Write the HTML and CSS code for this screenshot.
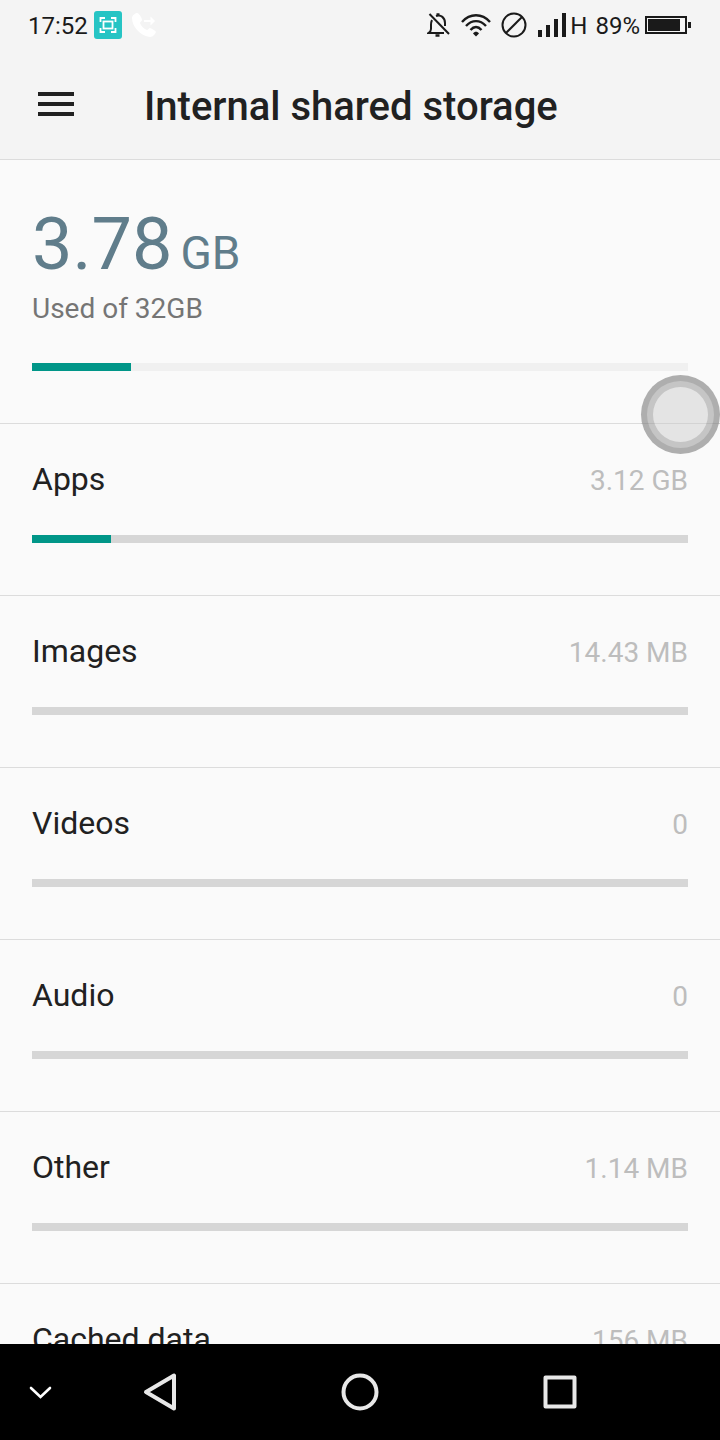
FILE: index.html
```html
<!DOCTYPE html>
<html lang="en">
<head>
<meta charset="utf-8">
<meta name="viewport" content="width=device-width, initial-scale=1">
<title>Internal shared storage</title>
<link rel="stylesheet" href="styles.css">
</head>
<body>
<div class="screen">
  <div class="status">
    <div class="status-group status-left">
      <span class="clock">17:52</span>
      <svg class="capture" width="28" height="28" viewBox="0 0 28 28" aria-hidden="true">
        <rect width="28" height="28" rx="3" fill="#26c4c4"/>
        <g fill="none" stroke="#fff" stroke-width="1.8">
          <path d="M6.500 11V7H11M17 7h4.500v4M21.500 17v4H17M11 21H6.500v-4"/>
          <rect x="9.500" y="10.500" width="9" height="7"/>
        </g>
      </svg>
      <svg class="call" width="28" height="28" viewBox="0 0 28 28" aria-hidden="true">
        <path d="M7 2c-1 0-5 2-5 5 0 9 9 18 18 19 3 0 5-3 6-5 0-1-5-4-6-4-1 0-2 2-3 2-3-1-6-4-7-7 0-1 2-2 2-3 0-2-3-7-5-7z" fill="#fff"/>
        <path d="M14 10h8" stroke="#fff" stroke-width="2"/>
        <path d="M20.500 5.500 25 10l-4.500 4.500z" fill="#fff"/>
      </svg>
    </div>
    <div class="status-group status-right">
      <svg width="24" height="26" viewBox="0 0 24 26" fill="none" stroke="#1a1a1a" stroke-width="2" aria-hidden="true">
        <path d="M5 8c-.7 1.500-1 3-1 5v4c0 1.500-1 3-2.500 4H17M9 4c5-2 9 2 9 7v3"/>
        <path d="M2.500 2 22 22"/>
        <path d="M8.500 23.500h4M9.500 2.500h3" stroke-width="2.500"/>
      </svg>
      <svg class="wifi" width="30" height="26" viewBox="0 0 30 26" fill="none" stroke="#1a1a1a" stroke-width="2.400" aria-hidden="true">
        <path d="M1 10C9 1 21 1 29 10M5 14c6-6.500 14-6.500 20 0M9.500 18c3.500-4 7.500-4 11 0"/>
        <path d="M12 21.500c1.500-2.500 4.500-2.500 6 0l-3 3z" fill="#1a1a1a" stroke="none"/>
      </svg>
      <svg class="blocked" width="26" height="26" viewBox="0 0 26 26" fill="none" stroke="#1a1a1a" stroke-width="2" aria-hidden="true">
        <circle cx="13" cy="13" r="11.500"/><path d="M5 21 21 5"/>
      </svg>
      <svg class="signal" width="28" height="26" viewBox="0 0 28 26" fill="#1a1a1a" aria-hidden="true">
        <path d="M0 18h4v7H0zM8 13h4v12H8zM16 7h4v18h-4zM24 1h4v24h-4z"/>
      </svg>
      <span class="network">H</span>
      <span class="charge">89%</span>
      <svg class="battery" width="46" height="26" viewBox="0 0 46 26" fill="#1a1a1a" aria-hidden="true">
        <rect x="1" y="5" width="40" height="16" fill="none" stroke="#1a1a1a" stroke-width="2"/>
        <path d="M3 7h32v12H3zM43 10h3v6h-3z"/>
      </svg>
    </div>
  </div>

  <header class="toolbar">
    <button class="menu" type="button" aria-label="Menu">
      <svg width="36" height="24" viewBox="0 0 36 24" fill="#212121" aria-hidden="true"><path d="M0 0h36v4H0zM0 10h36v4H0zM0 20h36v4H0z"/></svg>
    </button>
    <h1 class="title">Internal shared storage</h1>
  </header>

  <main class="content">
    <section class="summary">
      <p class="total"><span>3.78</span> <span class="unit">GB</span></p>
      <p class="caption">Used of 32GB</p>
      <div class="bar bar-light"><div class="fill" style="width:15.1%"></div></div>
    </section>
    <ul class="list">
      <li class="row"><div class="line"><span class="name">Apps</span><span class="size">3.12 GB</span></div><div class="bar"><div class="fill" style="width:12%"></div></div></li>
      <li class="row"><div class="line"><span class="name">Images</span><span class="size">14.43 MB</span></div><div class="bar"></div></li>
      <li class="row"><div class="line"><span class="name">Videos</span><span class="size">0</span></div><div class="bar"></div></li>
      <li class="row"><div class="line"><span class="name">Audio</span><span class="size">0</span></div><div class="bar"></div></li>
      <li class="row"><div class="line"><span class="name">Other</span><span class="size">1.14 MB</span></div><div class="bar"></div></li>
      <li class="row"><div class="line"><span class="name">Cached data</span><span class="size">156 MB</span></div><div class="bar"></div></li>
    </ul>
  </main>

  <nav class="nav" aria-label="System">
    <button class="nav-button nav-hide" type="button" aria-label="Hide navigation bar">
      <svg width="24" height="16" viewBox="0 0 24 16" fill="none" stroke="#fff" stroke-width="2.600" stroke-linecap="round" aria-hidden="true"><path d="M3 4l9.500 9L22 4"/></svg>
    </button>
    <button class="nav-button" type="button" aria-label="Back">
      <svg width="40" height="40" viewBox="0 0 40 40" fill="none" stroke="#e8e8e8" stroke-width="4" stroke-linejoin="round" aria-hidden="true"><path d="M34 3.500v33L6 20z"/></svg>
    </button>
    <button class="nav-button" type="button" aria-label="Home">
      <svg width="40" height="40" viewBox="0 0 40 40" fill="none" stroke="#e8e8e8" stroke-width="4" aria-hidden="true"><circle cx="20" cy="20" r="16.500"/></svg>
    </button>
    <button class="nav-button" type="button" aria-label="Recent apps">
      <svg width="40" height="40" viewBox="0 0 40 40" fill="none" stroke="#e8e8e8" stroke-width="4" stroke-linejoin="round" aria-hidden="true"><rect x="5.500" y="5.500" width="29" height="29"/></svg>
    </button>
  </nav>

  <button class="assist" type="button" aria-label="Assistive touch">
    <svg width="80" height="80" viewBox="0 0 80 80" aria-hidden="true">
      <circle cx="40.500" cy="40.500" r="39.500" fill="#aeaeae"/>
      <circle cx="40.500" cy="40.500" r="33.500" fill="#c5c5c5"/>
      <circle cx="40.500" cy="40.500" r="27.500" fill="#e4e4e4"/>
      <path d="M1 49.500h79" stroke="#000" stroke-opacity=".07"/>
    </svg>
  </button>
</div>
</body>
</html>
```
FILE: styles.css
```css
* {
  box-sizing: border-box;
}

body {
  margin: 0;
  background: #fafafa;
  color: #212121;
  font-family: Roboto, "Noto Sans", sans-serif;
}

button {
  padding: 0;
  border: 0;
  background: none;
}

svg {
  display: block;
  flex: none;
}

.screen {
  position: relative;
  display: flex;
  flex-direction: column;
  height: 100vh;
  overflow: hidden;
}

.status {
  display: flex;
  flex: none;
  justify-content: space-between;
  height: 50px;
  padding: 0 29px 0 28px;
  background: #f4f4f4;
  color: #1a1a1a;
  font-size: 24px;
  line-height: 28px;
}

.status-group {
  display: flex;
  align-items: center;
}

.clock,
.network,
.charge {
  padding-top: 2px;
}

.capture {
  margin-left: 6px;
}

.call {
  margin-left: 8px;
}

.wifi,
.blocked {
  margin-left: 10px;
}

.signal {
  margin-left: 11px;
}

.network {
  margin-left: 4px;
}

.charge {
  margin-left: 8px;
}

.battery {
  margin-left: 5px;
}

.toolbar {
  display: flex;
  flex: none;
  align-items: center;
  gap: 70px;
  height: 110px;
  padding: 0 38px;
  border-bottom: 1px solid #dcdcdc;
  background: #f4f4f4;
}

.menu {
  padding-bottom: 2px;
}

.title {
  margin: 0;
  padding-top: 4px;
  font-size: 40px;
  font-weight: 500;
  line-height: 48px;
}

.content {
  flex: 1;
  min-height: 0;
  overflow: hidden;
}

.summary {
  padding: 43px 32px 52px;
  border-bottom: 1px solid #dcdcdc;
}

.total {
  display: flex;
  align-items: baseline;
  gap: 8px;
  margin: 0 0 4px;
  color: #607d8b;
  font-size: 72px;
  line-height: 84px;
}

.unit {
  font-size: 46px;
  line-height: 54px;
}

.caption {
  margin: 0 0 36px;
  color: #757575;
  font-size: 28px;
  line-height: 36px;
}

.list {
  margin: 0;
  padding: 0;
  list-style: none;
}

.row {
  padding: 35px 32px 52px;
  border-bottom: 1px solid #dcdcdc;
}

.line {
  display: flex;
  align-items: baseline;
  justify-content: space-between;
  margin-bottom: 36px;
}

.name {
  font-size: 32px;
  line-height: 40px;
}

.size {
  color: #bdbdbd;
  font-size: 28px;
  line-height: 36px;
}

.bar {
  height: 8px;
  background: #d6d6d6;
}

.bar-light {
  background: #f0f0f0;
}

.fill {
  height: 100%;
  background: #009688;
}

.nav {
  display: grid;
  flex: none;
  grid-template-columns: 60px 1fr 1fr 1fr 60px;
  height: 96px;
  background: #000;
}

.nav-button {
  display: flex;
  align-items: center;
  justify-content: center;
}

.nav-hide {
  padding-left: 20px;
}

.assist {
  position: absolute;
  top: 374px;
  right: 0;
}
```
